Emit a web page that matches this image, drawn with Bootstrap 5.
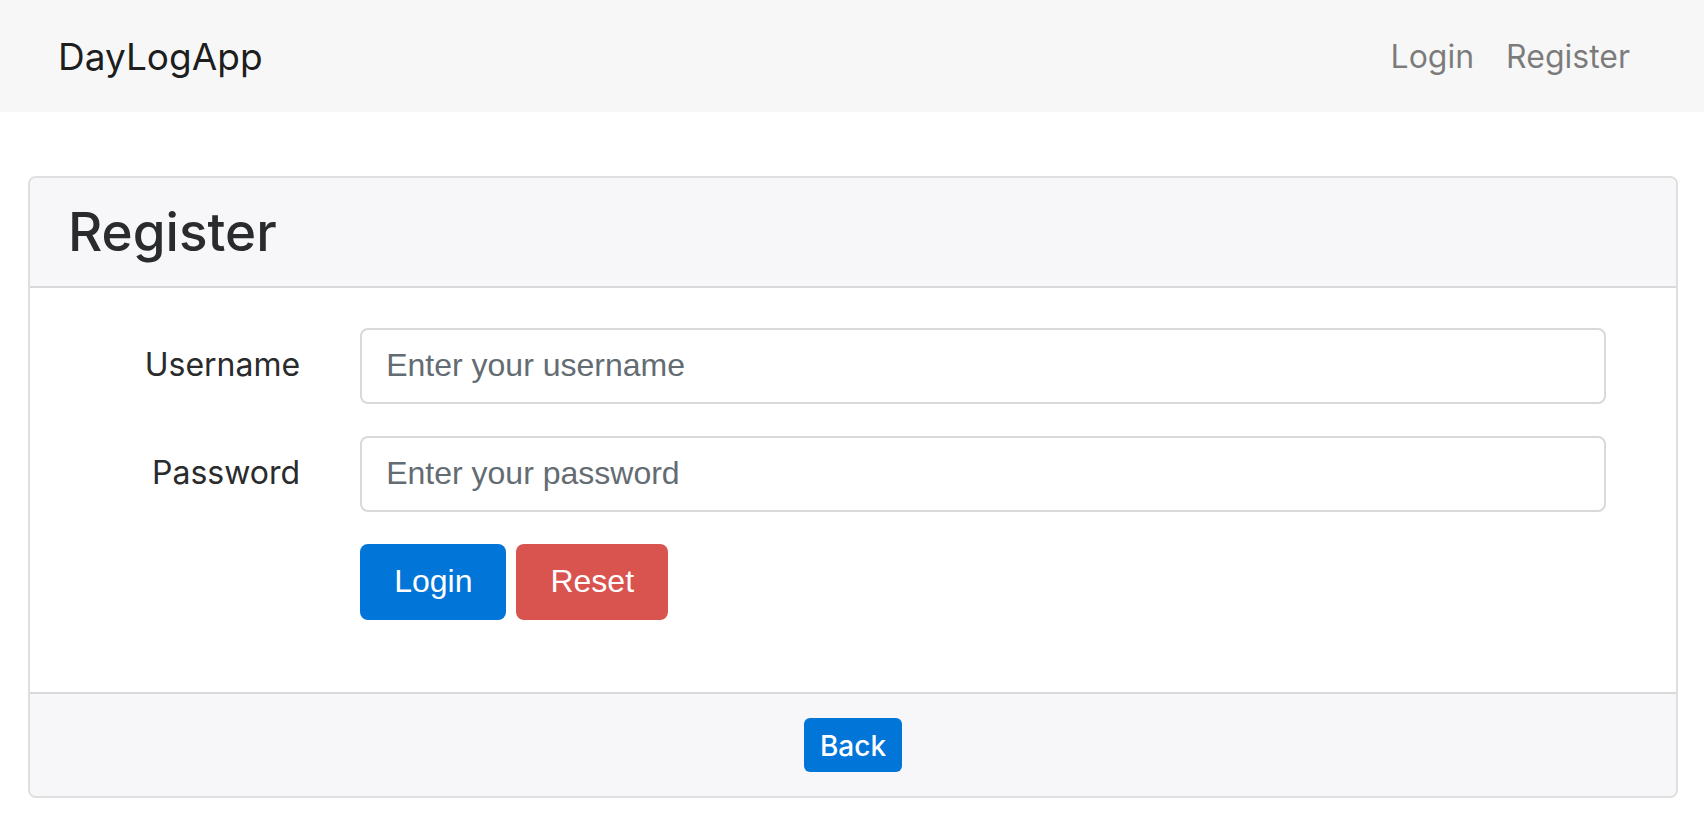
<!DOCTYPE html>
<html lang="en">
<head>
<meta charset="utf-8">
<meta name="viewport" content="width=device-width, initial-scale=1">
<title>DayLogApp</title>
<link href="https://cdn.jsdelivr.net/npm/bootstrap@5.3.0/dist/css/bootstrap.min.css" rel="stylesheet">
<style>
  body { font-family: Inter, sans-serif; font-size: 32px; line-height: 48px; color: #292b2c; }
  .site-nav { background: #f7f7f7; padding: 16px 58px; min-height: 112px; }
  .site-nav .navbar-brand { font-size: 37px; line-height: 60px; padding: 9px 0 7px; margin: 0; color: rgba(0,0,0,.9); }
  .site-nav .navbar-nav { gap: 32px; padding-right: 16px; }
  .site-nav .navbar-nav .nav-link { font-size: 32px; line-height: 48px; padding: 17px 0 15px; color: rgba(0,0,0,.5); }
  .page-body { padding: 64px 26px 28px 28px; }
  .form-card { border: 2px solid #dfdfdf; border-radius: 8px; }
  .form-card .card-header { background: #f7f7f9; border-bottom: 2px solid #d9d9db; padding: 24px 38px; border-radius: 6px 6px 0 0; }
  .form-card .card-footer { background: #f7f7f9; border-top: 2px solid #d9d9db; padding: 24px 40px; border-radius: 0 0 6px 6px; }
  .form-card .card-body { padding: 40px 40px 72px 39px; }
  .form-card h1 { font-size: 53px; line-height: 60px; font-weight: 500; margin: 0; }
  .form-stack { display: grid; gap: 32px; }
  .form-stack [class^="col-"] { padding: 0 30px; }
  .form-stack label { font-size: 32px; line-height: 48px; padding: 13px 0 15px; }
  .form-stack .form-control { font: 32px/40px "Liberation Sans", sans-serif; height: 76px; padding: 15px 24px 17px; border: 2px solid #d9d9d9; border-radius: 8px; }
  .form-control::placeholder { color: #636c72; opacity: 1; }
  .button-pair { gap: 10px; }
  .btn-large { font: 32px/40px "Liberation Sans", sans-serif; height: 76px; padding: 17px 34px 19px; border: 0; border-radius: 8px; }
  .btn-back { font-size: 28px; line-height: 42px; font-weight: 500; padding: 7px 16px 5px; border: 0; border-radius: 6px; }
  .fill-blue, .fill-blue:hover { background: #0275d8; color: #fff; }
  .fill-red, .fill-red:hover { background: #d9534f; color: #fff; }
</style>
</head>
<body>
<nav class="navbar navbar-expand site-nav justify-content-between">
  <a class="navbar-brand" href="#">DayLogApp</a>
  <ul class="navbar-nav">
    <li class="nav-item"><a class="nav-link" href="#">Login</a></li>
    <li class="nav-item"><a class="nav-link" href="#">Register</a></li>
  </ul>
</nav>
<main class="page-body">
  <div class="card form-card">
    <div class="card-header"><h1>Register</h1></div>
    <div class="card-body">
      <form class="form-stack">
        <div class="row g-0">
          <div class="col-2 text-end"><label for="username">Username</label></div>
          <div class="col-10"><input type="text" class="form-control" id="username" placeholder="Enter your username"></div>
        </div>
        <div class="row g-0">
          <div class="col-2 text-end"><label for="password">Password</label></div>
          <div class="col-10"><input type="password" class="form-control" id="password" placeholder="Enter your password"></div>
        </div>
        <div class="row g-0">
          <div class="col-10 offset-2 d-flex button-pair">
            <button type="submit" class="btn btn-large fill-blue">Login</button>
            <button type="reset" class="btn btn-large fill-red">Reset</button>
          </div>
        </div>
      </form>
    </div>
    <div class="card-footer d-flex justify-content-center">
      <a class="btn btn-back fill-blue" href="#">Back</a>
    </div>
  </div>
</main>
<script src="https://cdn.jsdelivr.net/npm/bootstrap@5.3.0/dist/js/bootstrap.bundle.min.js"></script>
</body>
</html>
